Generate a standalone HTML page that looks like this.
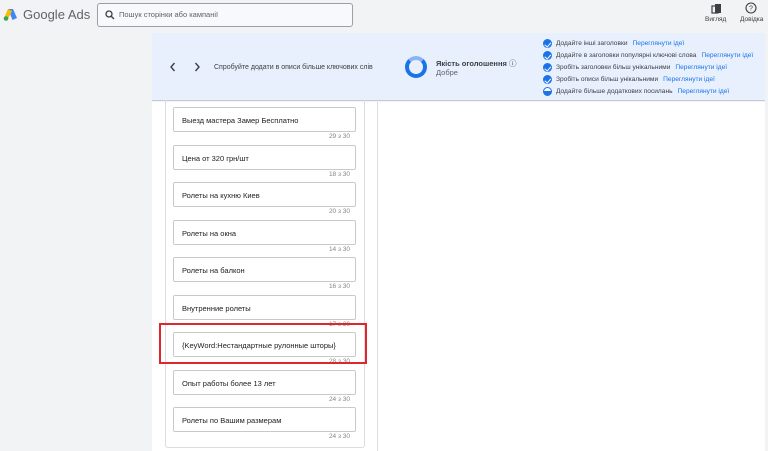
<!DOCTYPE html>
<html><head><meta charset="utf-8"><style>
*{margin:0;padding:0;box-sizing:border-box}
body{width:768px;height:451px;overflow:hidden;background:#f1f3f4;font-family:"Liberation Sans",Arial,sans-serif;position:relative;color:#3c4043}
.a{position:absolute}
.card{position:absolute;left:173px;width:183px;height:25px;border:1px solid #c7c9cc;border-radius:2px;background:#fff;font-size:7.5px;padding:8px 0 0 8px;color:#202124}
.cnt{position:absolute;left:300px;width:50px;text-align:right;font-size:6.5px;color:#80868b}
.chk{position:absolute;left:543px;width:9px;height:9px;border-radius:50%;background:#1a73e8}
.chk:after{content:"";position:absolute;left:2.5px;top:1.5px;width:2.5px;height:4.5px;border:solid #fff;border-width:0 1.3px 1.3px 0;transform:rotate(40deg)}
.tip{position:absolute;left:556px;font-size:6.6px;color:#3c4043;white-space:nowrap}
.tip span{color:#1a73e8;margin-left:5px}
</style></head><body>
<svg class="a" style="left:3px;top:8px" width="15" height="13" viewBox="0 0 15 13"><path d="M5 1 L10 1 L14 10 L9.5 12 Z" fill="#4285f4"/><path d="M5 1 L9 3 L4.5 12 L1 10 Z" fill="#fbbc04"/><circle cx="3" cy="10.5" r="2.3" fill="#34a853"/></svg>
<div class="a" style="left:23px;top:7px;font-size:13px;color:#5f6368">Google Ads</div>
<div class="a" style="left:97px;top:3px;width:256px;height:24px;border:1px solid #9aa0a6;border-radius:3px;background:#f8f9fa"></div>
<svg class="a" style="left:105px;top:10px" width="10" height="10" viewBox="0 0 10 10"><circle cx="4" cy="4" r="3" fill="none" stroke="#3c4043" stroke-width="1.3"/><path d="M6.2 6.2 L9 9" stroke="#3c4043" stroke-width="1.4"/></svg>
<div class="a" style="left:119px;top:10px;font-size:7.5px;color:#5f6368">Пошук сторінки або кампанії</div>
<svg class="a" style="left:711px;top:3px" width="11" height="11" viewBox="0 0 11 11"><rect x="1" y="3" width="6" height="7" fill="none" stroke="#3c4043" stroke-width="1.2"/><rect x="4" y="1" width="6" height="9" fill="#3c4043"/></svg>
<div class="a" style="left:705px;top:16px;font-size:6.5px;color:#3c4043">Вигляд</div>
<svg class="a" style="left:745px;top:2px" width="12" height="12" viewBox="0 0 12 12"><circle cx="6" cy="6" r="5" fill="none" stroke="#3c4043" stroke-width="1.1"/><text x="6" y="8.5" font-size="7" text-anchor="middle" fill="#3c4043" font-family="Liberation Sans">?</text></svg>
<div class="a" style="left:740px;top:16px;font-size:6.5px;color:#3c4043">Довідка</div>
<div class="a" style="left:152px;top:33px;width:613px;height:68px;background:#e8f0fe;border-bottom:1px solid #c6cbd2"></div>
<svg class="a" style="left:169px;top:62px" width="8" height="10" viewBox="0 0 8 10"><path d="M5.5 1 L2 5 L5.5 9" fill="none" stroke="#3c4043" stroke-width="1.4"/></svg>
<svg class="a" style="left:193px;top:62px" width="8" height="10" viewBox="0 0 8 10"><path d="M2.5 1 L6 5 L2.5 9" fill="none" stroke="#3c4043" stroke-width="1.4"/></svg>
<div class="a" style="left:214px;top:64px;font-size:7px">Спробуйте додати в описи більше ключових слів</div>
<div class="a" style="left:405px;top:56px;width:22px;height:22px;border-radius:50%;border:4px solid #1a73e8;border-top-color:#8ab4f8"></div>
<div class="a" style="left:436px;top:58px;font-size:7.5px;font-weight:bold;color:#3c4043">Якість оголошення <span style="font-weight:normal">ⓘ</span></div>
<div class="a" style="left:436px;top:68px;font-size:7.5px;color:#5f6368">Добре</div>
<div class="chk" style="top:39px"></div><div class="tip" style="top:40px">Додайте інші заголовки<span>Переглянути ідеї</span></div>
<div class="chk" style="top:51px"></div><div class="tip" style="top:52px">Додайте в заголовки популярні ключові слова<span>Переглянути ідеї</span></div>
<div class="chk" style="top:63px"></div><div class="tip" style="top:64px">Зробіть заголовки більш унікальними<span>Переглянути ідеї</span></div>
<div class="chk" style="top:75px"></div><div class="tip" style="top:76px">Зробіть описи більш унікальними<span>Переглянути ідеї</span></div>
<div class="a" style="left:543px;top:87px;width:9px;height:9px;border-radius:50%;background:linear-gradient(#fff 45%,#1a73e8 45%);border:1px solid #1a73e8"></div><div class="tip" style="top:88px">Додайте більше додаткових посилань<span>Переглянути ідеї</span></div>
<div class="a" style="left:152px;top:102px;width:613px;height:349px;background:#fff"></div>
<div class="a" style="left:165px;top:100px;width:200px;height:348px;border:1px solid #dadce0;border-top:none;border-radius:0 0 3px 3px"></div>
<div class="a" style="left:377px;top:102px;width:1px;height:349px;background:#dadce0"></div>
<div class="card" style="top:107px">Выезд мастера Замер Бесплатно</div><div class="cnt" style="top:133px">29 з 30</div>
<div class="card" style="top:145px">Цена от 320 грн/шт</div><div class="cnt" style="top:171px">18 з 30</div>
<div class="card" style="top:182px">Ролеты на кухню Киев</div><div class="cnt" style="top:208px">20 з 30</div>
<div class="card" style="top:220px">Ролеты на окна</div><div class="cnt" style="top:246px">14 з 30</div>
<div class="card" style="top:257px">Ролеты на балкон</div><div class="cnt" style="top:283px">16 з 30</div>
<div class="card" style="top:295px">Внутренние ролеты</div><div class="cnt" style="top:321px">17 з 30</div>
<div class="card" style="top:332px">{KeyWord:Нестандартные рулонные шторы}</div><div class="cnt" style="top:358px">28 з 30</div>
<div class="card" style="top:370px">Опыт работы более 13 лет</div><div class="cnt" style="top:396px">24 з 30</div>
<div class="card" style="top:407px">Ролеты по Вашим размерам</div><div class="cnt" style="top:433px">24 з 30</div>
<div class="a" style="left:159px;top:323px;width:208px;height:41px;border:2px solid #e0262b"></div>
</body></html>
